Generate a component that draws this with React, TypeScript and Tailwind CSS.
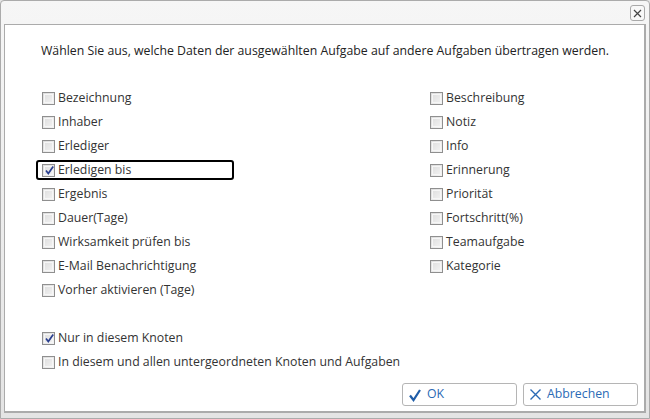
import React from "react";

const LEFT = [
  { label: "Bezeichnung" },
  { label: "Inhaber" },
  { label: "Erlediger" },
  { label: "Erledigen bis", checked: true, focus: true },
  { label: "Ergebnis" },
  { label: "Dauer(Tage)" },
  { label: "Wirksamkeit prüfen bis" },
  { label: "E-Mail Benachrichtigung" },
  { label: "Vorher aktivieren (Tage)" },
];

const RIGHT = [
  { label: "Beschreibung" },
  { label: "Notiz" },
  { label: "Info" },
  { label: "Erinnerung" },
  { label: "Priorität" },
  { label: "Fortschritt(%)" },
  { label: "Teamaufgabe" },
  { label: "Kategorie" },
];

function Box({ checked }: { checked?: boolean }) {
  return (
    <span className="relative inline-block w-[13px] h-[13px] shrink-0 border border-[#8f8f8f] bg-gradient-to-br from-[#dcdcdc] to-[#f4f4f4]">
      <span className="absolute inset-[1px] border border-[#f6f6f6]" />
      {checked && (
        <svg
          className="absolute left-[1px] top-[0px]"
          width="11"
          height="11"
          viewBox="0 0 11 11"
        >
          <path
            d="M2 5.5 L4.3 8.5 L9.2 1.5"
            fill="none"
            stroke="#2a3f8f"
            strokeWidth="1.7"
          />
        </svg>
      )}
    </span>
  );
}

function Row({
  label,
  checked,
  focus,
}: {
  label: string;
  checked?: boolean;
  focus?: boolean;
}) {
  return (
    <div className="h-6 flex items-center">
      <div
        className={[
          "flex items-center gap-[3px] h-[20px] pl-[4px] -ml-[5px] rounded-[3px] border-2",
          focus ? "border-black w-[198px]" : "border-transparent",
        ].join(" ")}
      >
        <Box checked={checked} />
        <span className="leading-none">{label}</span>
      </div>
    </div>
  );
}

export default function App() {
  return (
    <div
      className="w-[650px] h-[419px] bg-[#e6e6e6] text-[#333] text-[12.3px]"
      style={{ fontFamily: '"Open Sans", "Noto Sans", sans-serif' }}
    >
      <div className="h-full flex flex-col border border-[#ababab] rounded-t-[4px] bg-gradient-to-b from-[#f6f6f6] to-[#e4e4e4] px-[3px] pb-[5px]">
        <div className="h-[23px] flex items-start justify-end pt-[4px] pr-[1px] shrink-0">
          <button className="w-[15px] h-[16px] border border-[#a9a9a9] rounded-[3px] bg-[#f8f8f8] flex items-center justify-center">
            <svg width="9" height="9" viewBox="0 0 9 9">
              <path d="M1 1 L8 8 M8 1 L1 8" stroke="#444" strokeWidth="1.2" />
            </svg>
          </button>
        </div>
        <div className="flex-1 bg-white border border-[#ababab] border-r-[2px] border-b-[2px] flex flex-col pl-[36px] pr-[6px]">
          <p className="mt-[17px] h-[20px] text-[#222] whitespace-nowrap">
            Wählen Sie aus, welche Daten der ausgewählten Aufgabe auf andere Aufgaben übertragen werden.
          </p>
          <div className="mt-[24px] flex">
            <div className="w-[388px] flex flex-col">
              {LEFT.map((r) => (
                <Row key={r.label} {...r} />
              ))}
            </div>
            <div className="flex flex-col">
              {RIGHT.map((r) => (
                <Row key={r.label} {...r} />
              ))}
            </div>
          </div>
          <div className="mt-[24px] flex flex-col">
            <Row label="Nur in diesem Knoten" checked />
            <Row label="In diesem und allen untergeordneten Knoten und Aufgaben" />
          </div>
          <div className="mt-[9px] flex justify-end gap-[6px]">
            <button className="w-[115px] h-[23px] border border-[#b5b5b5] rounded-[3px] bg-white flex items-center gap-[5px] px-[5px] text-[#2a6ab5]">
              <svg width="14" height="14" viewBox="0 0 14 14">
                <path d="M2 7.5 L5.5 12 L12 2" fill="none" stroke="#1f5da8" strokeWidth="2.2" />
              </svg>
              <span>OK</span>
            </button>
            <button className="w-[115px] h-[23px] border border-[#b5b5b5] rounded-[3px] bg-white flex items-center gap-[5px] px-[5px] text-[#2a6ab5]">
              <svg width="13" height="13" viewBox="0 0 13 13">
                <path d="M1.5 1.5 L11.5 11.5 M11.5 1.5 L1.5 11.5" stroke="#2a6ab5" strokeWidth="1.4" />
              </svg>
              <span>Abbrechen</span>
            </button>
          </div>
        </div>
      </div>
    </div>
  );
}
